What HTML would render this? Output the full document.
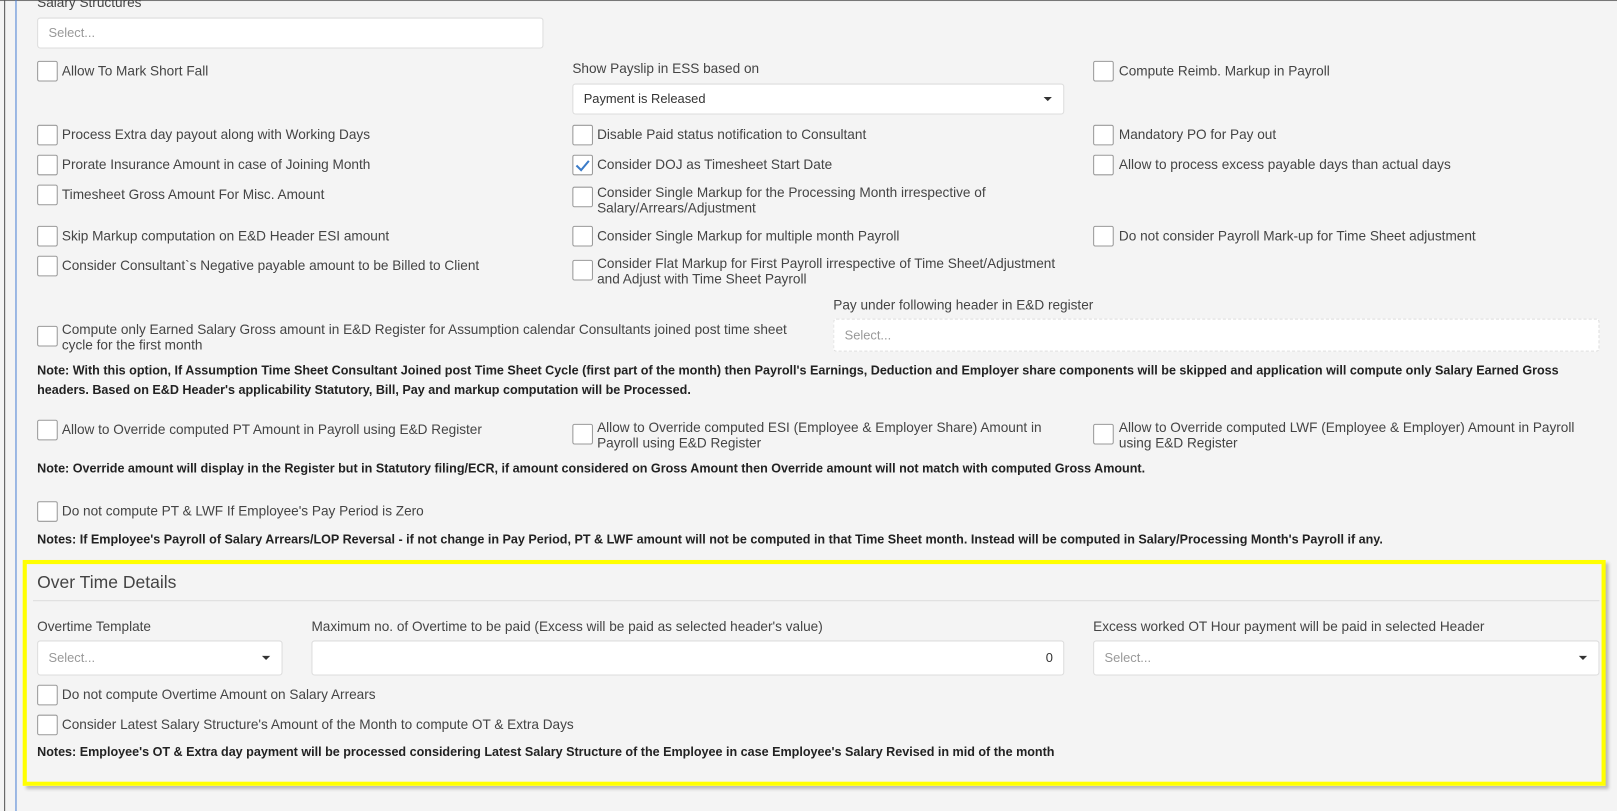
<!DOCTYPE html>
<html><head><meta charset="utf-8"><style>
*{box-sizing:border-box;margin:0;padding:0}
html,body{width:1617px;height:811px;overflow:hidden;background:#f4f4f4}
#w{width:1568px;height:787px;position:relative;transform:scale(1.03125);transform-origin:0 0;font-family:"Liberation Sans",sans-serif;font-size:13.2px;color:#444}
.a{position:absolute;white-space:nowrap;line-height:15px}
.cb{position:absolute;width:20px;height:20px;border:1px solid #999;border-radius:2px;background:#fff}
.in{position:absolute;background:#fff;border:1px solid #ddd;border-radius:3px}
.ph{position:absolute;left:10px;top:50%;transform:translateY(-50%);color:#999;font-size:12.5px}
.car{position:absolute;right:11px;top:50%;margin-top:-2px;border-left:4px solid transparent;border-right:4px solid transparent;border-top:4px solid #333}
.b{font-weight:bold;color:#222;font-size:12.2px}
</style></head><body><div id="w">
<div style="position:absolute;left:0;top:0;width:1568px;height:1px;background:#777"></div>
<div style="position:absolute;left:4px;top:0;width:1px;height:787px;background:#555"></div>
<div style="position:absolute;left:15px;top:0;width:1px;height:787px;background:#4a7fd4"></div>

<div class="a" style="left:36px;top:-5px">Salary Structures</div>
<div class="in" style="left:36px;top:17px;width:491px;height:30px"><span class="ph">Select...</span></div>

<div class="cb" style="left:36px;top:59px"></div><div class="a" style="left:60px;top:61px">Allow To Mark Short Fall</div>
<div class="a" style="left:555px;top:59px">Show Payslip in ESS based on</div>
<div class="in" style="left:555px;top:81px;width:477px;height:30px"><span class="ph" style="color:#333">Payment is Released</span><span class="car"></span></div>
<div class="cb" style="left:1060px;top:59px"></div><div class="a" style="left:1085px;top:61px">Compute Reimb. Markup in Payroll</div>

<div class="cb" style="left:36px;top:121px"></div><div class="a" style="left:60px;top:123px">Process Extra day payout along with Working Days</div>
<div class="cb" style="left:555px;top:121px"></div><div class="a" style="left:579px;top:123px">Disable Paid status notification to Consultant</div>
<div class="cb" style="left:1060px;top:121px"></div><div class="a" style="left:1085px;top:123px">Mandatory PO for Pay out</div>

<div class="cb" style="left:36px;top:150px"></div><div class="a" style="left:60px;top:152px">Prorate Insurance Amount in case of Joining Month</div>
<div class="cb" style="left:555px;top:150px"><svg width="18" height="18" style="position:absolute;left:0;top:0"><path d="M3 9.5 L7.5 14 L15 5" stroke="#3a7bc8" stroke-width="2" fill="none"/></svg></div><div class="a" style="left:579px;top:152px">Consider DOJ as Timesheet Start Date</div>
<div class="cb" style="left:1060px;top:150px"></div><div class="a" style="left:1085px;top:152px">Allow to process excess payable days than actual days</div>

<div class="cb" style="left:36px;top:179px"></div><div class="a" style="left:60px;top:181px">Timesheet Gross Amount For Misc. Amount</div>
<div class="cb" style="left:555px;top:181px"></div><div class="a" style="left:579px;top:179px">Consider Single Markup for the Processing Month irrespective of<br>Salary/Arrears/Adjustment</div>

<div class="cb" style="left:36px;top:219px"></div><div class="a" style="left:60px;top:221px">Skip Markup computation on E&amp;D Header ESI amount</div>
<div class="cb" style="left:555px;top:219px"></div><div class="a" style="left:579px;top:221px">Consider Single Markup for multiple month Payroll</div>
<div class="cb" style="left:1060px;top:219px"></div><div class="a" style="left:1085px;top:221px">Do not consider Payroll Mark-up for Time Sheet adjustment</div>

<div class="cb" style="left:36px;top:248px"></div><div class="a" style="left:60px;top:250px">Consider Consultant`s Negative payable amount to be Billed to Client</div>
<div class="cb" style="left:555px;top:252px"></div><div class="a" style="left:579px;top:248px">Consider Flat Markup for First Payroll irrespective of Time Sheet/Adjustment<br>and Adjust with Time Sheet Payroll</div>

<div class="a" style="left:808px;top:288px">Pay under following header in E&amp;D register</div>
<div class="in" style="left:808px;top:309px;width:743px;height:32px;border:1px dashed #ddd"><span class="ph">Select...</span></div>
<div class="cb" style="left:36px;top:316px"></div><div class="a" style="left:60px;top:312px">Compute only Earned Salary Gross amount in E&amp;D Register for Assumption calendar Consultants joined post time sheet<br>cycle for the first month</div>

<div class="a b" style="left:36px;top:350px;line-height:19px">Note: With this option, If Assumption Time Sheet Consultant Joined post Time Sheet Cycle (first part of the month) then Payroll's Earnings, Deduction and Employer share components will be skipped and application will compute only Salary Earned Gross<br>headers. Based on E&amp;D Header's applicability Statutory, Bill, Pay and markup computation will be Processed.</div>

<div class="cb" style="left:36px;top:407px"></div><div class="a" style="left:60px;top:409px">Allow to Override computed PT Amount in Payroll using E&amp;D Register</div>
<div class="cb" style="left:555px;top:411px"></div><div class="a" style="left:579px;top:407px">Allow to Override computed ESI (Employee &amp; Employer Share) Amount in<br>Payroll using E&amp;D Register</div>
<div class="cb" style="left:1060px;top:411px"></div><div class="a" style="left:1085px;top:407px">Allow to Override computed LWF (Employee &amp; Employer) Amount in Payroll<br>using E&amp;D Register</div>

<div class="a b" style="left:36px;top:447px">Note: Override amount will display in the Register but in Statutory filing/ECR, if amount considered on Gross Amount then Override amount will not match with computed Gross Amount.</div>

<div class="cb" style="left:36px;top:486px"></div><div class="a" style="left:60px;top:488px">Do not compute PT &amp; LWF If Employee's Pay Period is Zero</div>
<div class="a b" style="left:36px;top:516px">Notes: If Employee's Payroll of Salary Arrears/LOP Reversal - if not change in Pay Period, PT &amp; LWF amount will not be computed in that Time Sheet month. Instead will be computed in Salary/Processing Month's Payroll if any.</div>

<div style="position:absolute;left:22px;top:543px;width:1535px;height:219px;border:4px solid #ffff00;box-shadow:3px 3px 3px #bbb"></div>
<div class="a" style="left:36px;top:555px;font-size:17px;line-height:20px;color:#444">Over Time Details</div>
<div style="position:absolute;left:32px;top:582px;width:1519px;height:1px;background:#ddd"></div>

<div class="a" style="left:36px;top:600px">Overtime Template</div>
<div class="a" style="left:302px;top:600px">Maximum no. of Overtime to be paid (Excess will be paid as selected header's value)</div>
<div class="a" style="left:1060px;top:600px">Excess worked OT Hour payment will be paid in selected Header</div>
<div class="in" style="left:36px;top:621px;width:238px;height:34px"><span class="ph">Select...</span><span class="car"></span></div>
<div class="in" style="left:302px;top:621px;width:730px;height:34px"><span class="ph" style="left:auto;right:10px;color:#333">0</span></div>
<div class="in" style="left:1060px;top:621px;width:491px;height:34px"><span class="ph">Select...</span><span class="car"></span></div>

<div class="cb" style="left:36px;top:664px"></div><div class="a" style="left:60px;top:666px">Do not compute Overtime Amount on Salary Arrears</div>
<div class="cb" style="left:36px;top:693px"></div><div class="a" style="left:60px;top:695px">Consider Latest Salary Structure's Amount of the Month to compute OT &amp; Extra Days</div>
<div class="a b" style="left:36px;top:722px">Notes: Employee's OT &amp; Extra day payment will be processed considering Latest Salary Structure of the Employee in case Employee's Salary Revised in mid of the month</div>
</div></body></html>
